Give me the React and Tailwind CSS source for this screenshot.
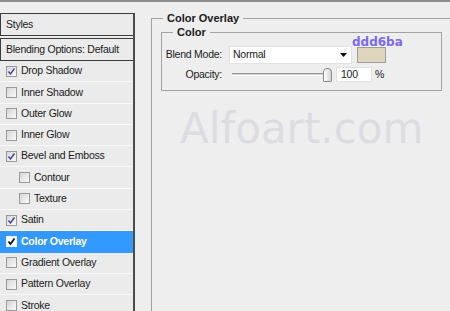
const rows = [
  { label: "Drop Shadow", checked: true },
  { label: "Inner Shadow" },
  { label: "Outer Glow" },
  { label: "Inner Glow" },
  { label: "Bevel and Emboss", checked: true },
  { label: "Contour", indent: true },
  { label: "Texture", indent: true },
  { label: "Satin", checked: true },
  { label: "Color Overlay", checked: true, active: true },
  { label: "Gradient Overlay" },
  { label: "Pattern Overlay" },
  { label: "Stroke" },
];

function Check({ checked, active }) {
  return (
    <span
      className={
        "w-[11px] h-[11px] shrink-0 border flex items-center justify-center " +
        (active
          ? "border-[#e8f2ff] bg-white"
          : "border-[#9a9a9a] bg-gradient-to-br from-[#d6d6d6] to-[#fafafa]")
      }
    >
      {checked && (
        <svg width="9" height="9" viewBox="0 0 9 9">
          <path
            d="M1.5 4.5 L3.5 7 L7.5 1.5"
            fill="none"
            stroke={active ? "#111" : "#3b3b9a"}
            strokeWidth={active ? 1.8 : 1.3}
          />
        </svg>
      )}
    </span>
  );
}

export default function App() {
  return (
    <div
      className="relative w-[450px] h-[311px] overflow-hidden bg-[#eeeeee] border-t-2 border-[#8c8c8c] flex text-[10.5px] tracking-[-0.25px] text-[#1a1a1a] whitespace-nowrap"
      style={{ fontFamily: '"Liberation Sans", Arial, sans-serif' }}
    >
      {/* Styles list */}
      <div className="w-[135px] pt-[11px] flex flex-col">
        <div className="flex-1 flex flex-col border-r-2 border-[#4c4c4c] bg-[#ebebeb]">
          <div className="h-[23px] border-l border-t border-b border-[#3c3c3c] flex items-center pl-[5px]">
            Styles
          </div>
          <div className="mt-[2px] h-[23px] border-l border-t border-b border-[#3c3c3c] flex items-center pl-[5px]">
            Blending Options: Default
          </div>
          {rows.map((r) => (
            <div
              key={r.label}
              className={
                "h-[21.3px] shrink-0 flex items-center gap-[4px] border-b " +
                (r.indent ? "pl-[19px] " : "pl-[6px] ") +
                (r.active
                  ? "bg-[#3399ff] border-[#3399ff] text-white font-bold"
                  : "border-[#f8f8f8]")
              }
            >
              <Check checked={r.checked} active={r.active} />
              <span>{r.label}</span>
            </div>
          ))}
        </div>
      </div>

      {/* Settings */}
      <div className="flex-1 pl-[16px] pt-[10px] flex">
        <fieldset className="flex-1 border-l border-t border-[#a3a3a3]">
          <legend className="ml-[11px] px-[4px] font-bold leading-[13px] text-[11px] tracking-normal">
            Color Overlay
          </legend>
          <fieldset className="ml-[9px] mt-[1px] w-[281px] h-[65px] border border-[#a3a3a3]">
            <legend className="ml-[11px] px-[4px] font-bold leading-[13px] text-[11px] tracking-normal">
              Color
            </legend>
            <div className="pt-[7px] flex flex-col gap-[3px]">
              <div className="flex items-center">
                <span className="w-[60px] text-right">Blend Mode:</span>
                <div className="ml-[7px] w-[123px] h-[18px] bg-white border border-[#e2e2e2] flex items-center pl-[3px] pr-[4px]">
                  <span className="flex-1">Normal</span>
                  <svg width="7" height="4" viewBox="0 0 7 4">
                    <path d="M0 0 H7 L3.5 4 Z" fill="#000" />
                  </svg>
                </div>
                <span className="ml-[5px] w-[29px] h-[16px] bg-[#ddd6ba] border border-[#9d9d9d]" />
              </div>
              <div className="flex items-center">
                <span className="w-[60px] text-right">Opacity:</span>
                <div className="ml-[10px] w-[100px] h-[15px] flex items-center">
                  <span className="flex-1 h-[3px] border-t border-b border-t-[#9a9a9a] border-b-white bg-[#d0d0d0]" />
                  <span className="w-[9px] h-[14px] rounded-t-[4px] rounded-b-[1px] border border-[#8a8a8a] bg-gradient-to-r from-white to-[#d4d4d4]" />
                </div>
                <span className="ml-[4px] w-[36px] h-[15px] bg-white border border-[#e2e2e2] flex items-center pl-[4px]">
                  100
                </span>
                <span className="ml-[3px]">%</span>
              </div>
            </div>
          </fieldset>
        </fieldset>
      </div>

      {/* annotation */}
      <span
        className="absolute left-[352px] top-[31px] text-[12px] tracking-normal font-bold text-[#7a6af2]"
        style={{ fontFamily: '"DejaVu Sans", Verdana, sans-serif' }}
      >
        ddd6ba
      </span>

      {/* watermark */}
      <span
        className="absolute left-[180px] top-[106px] text-[42px] tracking-normal leading-none text-[#dcdce2] pointer-events-none"
        style={{ fontFamily: '"DejaVu Sans", sans-serif' }}
      >
        Alfoart.com
      </span>
    </div>
  );
}
